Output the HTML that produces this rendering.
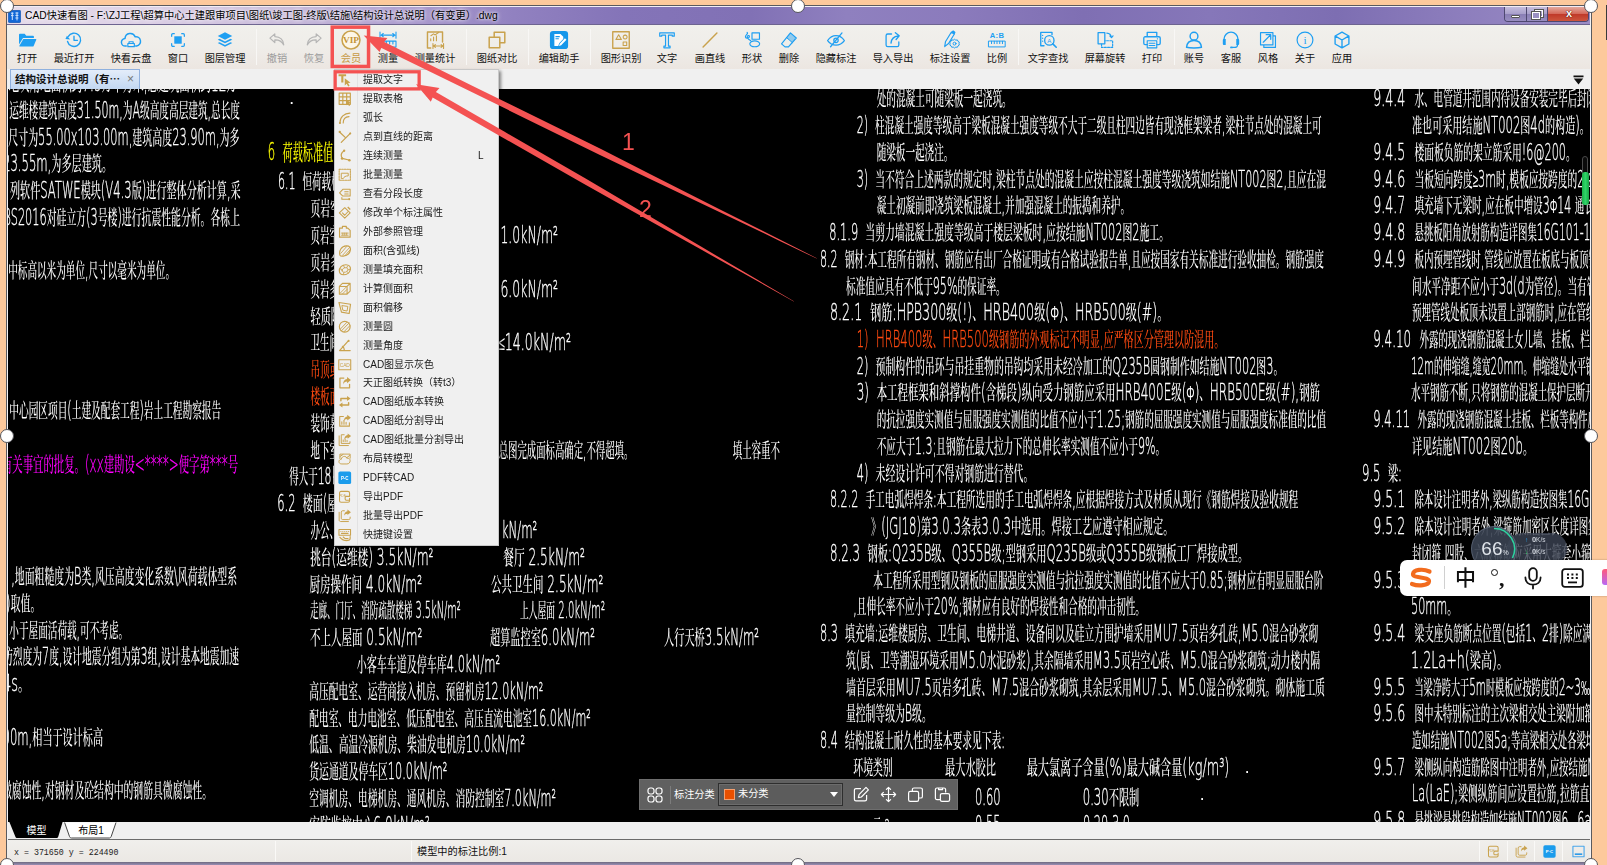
<!DOCTYPE html>
<html lang="zh-CN"><head><meta charset="utf-8"><title>CAD快速看图</title>
<style>
html,body{margin:0;padding:0}
body{width:1607px;height:865px;position:relative;overflow:hidden;background:#fdc99c;font-family:"Liberation Sans","Noto Sans CJK SC","WenQuanYi Zen Hei",sans-serif;font-size:10px;color:#000}
*{box-sizing:border-box}
.abs{position:absolute}
#frame{position:absolute;left:6px;top:5px;width:1586px;height:870px;background:#f4f2f4;border:1px solid #5a5a5e}
#title{position:absolute;left:7px;top:6px;width:1583px;height:19px;background:linear-gradient(90deg,#e6dcea 0,#ddd1e6 8%,#cabcdb 17%,#ad9dcf 25%,#9181c0 32%,#8474b8 39%,#8171b5 47%,#8f80bf 53%,#8b7bbc 60%,#7f6fb3 68%,#8677b9 76%,#7d6eb2 84%,#8d7ebd 92%,#9a8cc5 100%);border-top:1px solid #f3eef6;border-bottom:1px solid #6d6490}
#title .t{position:absolute;left:18px;top:1px;height:16px;line-height:16px;font-size:10.25px;color:#000;white-space:nowrap;text-shadow:0 0 5px rgba(255,255,255,.9),0 0 3px rgba(255,255,255,.8)}
#tb{position:absolute;left:7px;top:25px;width:1583px;height:44px;background:linear-gradient(180deg,#f1f0ec 0,#efede9 50%,#ece6e1 100%)}
.ti{position:absolute;top:0;height:44px;text-align:center;white-space:nowrap}
.ti svg{position:absolute;left:50%;top:4.5px;margin-left:-10px;width:20px;height:20px;overflow:visible}
.ti b{position:absolute;left:-20px;right:-20px;top:27px;height:13px;line-height:13px;font-weight:normal;font-size:10.2px;color:#111}
.ti.dis b{color:#9c9c9c}
.ti.vip b{color:#c79a45}
.sep{position:absolute;top:4px;width:1px;height:36px;background:#d9d5d2;border-right:1px solid #f8f7f5}
#tabs{position:absolute;left:7px;top:69px;width:1583px;height:20px;background:#f0f0f0}
#tab1{position:absolute;left:3px;top:0;width:130px;height:20px;border:1px solid #8fb0de;border-bottom:none;background:linear-gradient(180deg,#e4edfa 0,#cfe0f5 60%,#c3d8f2 100%);font-weight:bold;font-size:10.5px;line-height:19px;padding-left:4px;white-space:nowrap;color:#111}
#tab1 i{position:absolute;right:5px;top:0;font-style:normal;font-weight:normal;color:#777;font-size:12px}
#cv{position:absolute;left:8px;top:89px;width:1582px;height:733px;background:#000;overflow:hidden}
#cad{position:absolute;left:-8px;top:-89px;will-change:transform}
#cad text{font-family:"Liberation Sans","Noto Serif CJK SC",serif;font-size:20px;color:#fff;fill:currentColor;font-weight:500}
#cad .l{font-family:"DejaVu Sans Light","DejaVu Sans","Liberation Sans",sans-serif;font-size:1.15em;font-weight:200;stroke:currentColor;stroke-width:.35px}
#cad .dot{font-family:"Liberation Sans",sans-serif;font-weight:700;font-size:12px}
#mtabs{position:absolute;left:8px;top:822px;width:1582px;height:18px;background:#f0f0f0;border-bottom:1px solid #6b6b6b}
#status{position:absolute;left:7px;top:840px;width:1583px;height:22px;background:linear-gradient(180deg,#f0efec,#ebe8e4)}
#status .m{position:absolute;top:7px;font-family:"Liberation Mono",monospace;font-size:8.3px;line-height:12px;color:#222;white-space:pre}
#status .s{position:absolute;top:6px;font-size:10.2px;line-height:12px;color:#111;white-space:nowrap}
#status .v{position:absolute;top:1px;width:1px;height:20px;background:#dad6d2;border-right:1px solid #faf9f7}
#bot{position:absolute;left:6px;top:862px;width:1586px;height:3px;background:linear-gradient(180deg,#6e6a80,#9a8fb5)}
#menu{position:absolute;left:334px;top:69px;width:165px;height:477px;background:#f0f0f0;border:1px solid #c9c9c9;box-shadow:2px 2px 3px rgba(0,0,0,.45)}
#menu .ic{position:absolute;left:0;top:0;width:23px;height:100%;background:#f0f0f0;border-right:1px solid #e2e2e2}
.mi{position:absolute;left:0;width:163px;height:19px;line-height:19px;font-size:10px;color:#1a1a1a;white-space:nowrap}
.mi svg{position:absolute;left:2.5px;top:3px;width:13.5px;height:13.5px;overflow:visible}
.mi span{position:absolute;left:28px;top:0}
.mi em{position:absolute;left:143px;top:0;font-style:normal}
#ftb{position:absolute;left:631px;top:690px;width:319px;height:31px;background:#606060;border:1px solid #6e6e6e}
#ftb .lab{position:absolute;left:34px;top:8px;line-height:14px;font-size:10.2px;color:#fff;white-space:nowrap}
#ftb .dd{position:absolute;left:78px;top:3px;width:125px;height:23px;background:#5c5c5c;border:1px solid #2e2e2e;box-shadow:inset 0 0 0 1px #6c6c6c}
#ftb .dd i{position:absolute;left:5px;top:5px;width:11px;height:11px;background:#e95000;border:1px solid #f4a070}
#ftb .dd span{position:absolute;left:19px;top:3px;line-height:14px;font-size:10.2px;color:#fff}
#ftb .dd u{position:absolute;right:4px;top:8px;width:0;height:0;border-left:4px solid transparent;border-right:4px solid transparent;border-top:5px solid #fff}
.hd{position:absolute;width:14px;height:14px;border-radius:50%;background:#fff;border:1.8px solid #55555a}
</style></head><body>
<div id="frame"></div>
<div id="title">
<svg class="abs" style="left:1px;top:3px;width:13px;height:13px" viewBox="0 0 13 13"><rect x=".3" y=".3" width="12.400" height="12.400" rx="1.400" fill="#1268d6" stroke="#0d4da6" stroke-width=".6"/><path fill="none" stroke="#cfe4ff" stroke-width="1" d="M3 3.200h2.600M3 5.600h2.600M4.300 2.400v7.600M7.400 3h3M7.400 5.400h3M7.400 8h3M9 2.400v8"/></svg>
<div class="t">CAD快速看图 - F:\ZJ工程\超算中心土建跟审项目\图纸\竣工图-终版\结施\结构设计总说明（有变更）.dwg</div>
<div class="abs" style="left:1497px;top:0;width:85px;height:15px;border:1px solid #4e4870;border-top:none;border-radius:0 0 4px 4px;overflow:hidden;background:linear-gradient(180deg,#b9b0d6,#8b80b6)">
 <div class="abs" style="left:0;top:0;width:22px;height:15px;border-right:1px solid #4e4870;background:linear-gradient(180deg,#c4bcdc 0,#a9a0cb 45%,#8a7fb5 50%,#9a90c2 100%)"><div class="abs" style="left:6px;top:8px;width:9px;height:3px;background:#fff;border:1px solid #555;border-radius:1px"></div></div>
 <div class="abs" style="left:22px;top:0;width:21px;height:15px;border-right:1px solid #4e4870;background:linear-gradient(180deg,#c4bcdc 0,#a9a0cb 45%,#8a7fb5 50%,#9a90c2 100%)"><div class="abs" style="left:8px;top:3px;width:8px;height:7px;border:1.500px solid #fff;outline:1px solid #555"></div><div class="abs" style="left:5px;top:5px;width:8px;height:7px;border:1.500px solid #fff;outline:1px solid #555;background:#9a90c2"></div></div>
 <div class="abs" style="left:43px;top:0;width:42px;height:15px;background:linear-gradient(180deg,#e5a99c 0,#d4695a 45%,#c03a2a 50%,#cf5a40 100%);color:#fff;font-weight:bold;font-size:11px;line-height:13px;text-align:center;text-shadow:0 0 1px #400,0 0 1px #400">x</div>
</div>
</div>
<div id="tb">
<div class="ti " style="left:2px;width:36px"><svg viewBox="0 0 22 22"><path fill="#1f9ff2" d="M2.2 5.2c0-.6.4-1 1-1h5.2l1.8 2h7.4c.6 0 1 .4 1 1v1.6H6.6L2.2 16z"/><path fill="#1f9ff2" d="M7 9.8h13.6c.5 0 .8.4.6.9l-2.9 6.9c-.2.4-.5.6-.9.6H3.2c-.5 0-.8-.4-.6-.9z"/></svg><b>打开</b></div>
<div class="ti " style="left:49px;width:36px"><svg viewBox="0 0 22 22"><path fill="none" stroke="#1f9ff2" stroke-width="1.5" stroke-linecap="round" stroke-linejoin="round" d="M4.6 7.2A7.3 7.3 0 1 1 3.9 12.6"/><path fill="#1f9ff2" d="M1.6 9.9l5.2.6-3.6-4.2z"/><path fill="none" stroke="#1f9ff2" stroke-width="1.5" stroke-linecap="round" stroke-linejoin="round" d="M11 6.8v4.6h3.8"/></svg><b>最近打开</b></div>
<div class="ti " style="left:106px;width:36px"><svg viewBox="0 0 22 22" style="transform:scale(1.08)"><path fill="none" stroke="#1f9ff2" stroke-width="1.5" stroke-linecap="round" stroke-linejoin="round" d="M6.2 17.2H5.4a3.9 3.9 0 0 1-.5-7.8 5.4 5.4 0 0 1 10.4-1.6 4.6 4.6 0 0 1 1.4 9.3h-1"/><path fill="none" stroke="#1f9ff2" stroke-width="1.2" stroke-linecap="round" stroke-linejoin="round" d="M7.8 17.8v-3.2h6.6v3.2zM9 14.4v-1.6h4.2v1.6"/></svg><b>快看云盘</b></div>
<div class="ti " style="left:153px;width:36px"><svg viewBox="0 0 22 22" style="transform:scale(0.85)"><rect x="6.2" y="6.2" width="9.6" height="9.6" fill="#1f9ff2"/><path fill="none" stroke="#1f9ff2" stroke-width="1.6" stroke-linecap="round" stroke-linejoin="round" d="M2.8 6.2V4.3c0-.8.7-1.5 1.5-1.5h1.9M15.8 2.8h1.9c.8 0 1.5.7 1.5 1.5v1.9M19.2 15.8v1.9c0 .8-.7 1.5-1.5 1.5h-1.9M6.2 19.2H4.3c-.8 0-1.5-.7-1.5-1.5v-1.9"/></svg><b>窗口</b></div>
<div class="ti " style="left:200px;width:36px"><svg viewBox="0 0 22 22"><path fill="#1f9ff2" d="M11 2.6l8 4-8 4-8-4z"/><path fill="#1f9ff2" d="M5 9.6l6 3 6-3 2 1-8 4-8-4z"/><path fill="#1f9ff2" d="M5 13.4l6 3 6-3 2 1-8 4-8-4z"/></svg><b>图层管理</b></div>
<div class="sep" style="left:249px"></div>
<div class="ti dis" style="left:252px;width:36px"><svg viewBox="0 0 22 22"><path fill="none" stroke="#b5b5b5" stroke-width="1.3" stroke-linecap="round" stroke-linejoin="round" d="M8.6 4.2L3.2 9l5.4 4.8v-3c4.6-.2 7.6 1.400 9.800 5.600C18 10.600 14.600 7.400 8.600 7.200z"/></svg><b>撤销</b></div>
<div class="ti dis" style="left:289px;width:36px"><svg viewBox="0 0 22 22"><path fill="none" stroke="#b5b5b5" stroke-width="1.3" stroke-linecap="round" stroke-linejoin="round" d="M13.4 4.2L18.8 9l-5.4 4.8v-3c-4.6-.2-7.6 1.400-9.800 5.600C4 10.600 7.400 7.400 13.400 7.200z"/></svg><b>恢复</b></div>
<div class="ti vip" style="left:326px;width:36px"><svg viewBox="0 0 22 22" style="transform:scale(1.06)"><circle cx="11" cy="11" r="9.3" fill="#fdf6e6" stroke="#c9a24d" stroke-width="1.6"/><text x="11" y="14.6" text-anchor="middle" font-family="Liberation Serif,serif" font-weight="bold" font-size="9.6" fill="#c39436">VIP</text></svg><b>会员</b></div>
<div class="ti " style="left:363px;width:36px"><svg viewBox="0 0 22 22"><path fill="none" stroke="#1f9ff2" stroke-width="1.2" stroke-linecap="round" stroke-linejoin="round" d="M2.2 2.200v6.800M19.800 2.200v6.800M3.400 5.600h15.200M5.800 3.800L3.400 5.600l2.400 1.800M16.200 3.800l2.400 1.800-2.400 1.800"/><path fill="none" stroke="#1f9ff2" stroke-width="1.2" stroke-linecap="round" stroke-linejoin="round" d="M2.200 12.200h17.600v6.600H2.200zM5.600 12.400v3M9.200 12.400v3M12.800 12.400v3M16.400 12.400v3"/></svg><b>测量</b></div>
<div class="ti " style="left:410px;width:36px"><svg viewBox="0 0 22 22" style="transform:scale(1.12)"><path fill="none" stroke="#c9a24d" stroke-width="1.4" stroke-linecap="round" stroke-linejoin="round" d="M18.400 13V3.200H3.600v15.600h3.200"/><path fill="none" stroke="#c9a24d" stroke-width="1.1" stroke-linecap="round" stroke-linejoin="round" d="M6.800 11.800v-2M9.600 11.800V8.200M12.400 11.800V6.800M7 6.800l2.600-1.800 1.600 1 3.200-2.400"/><path fill="none" stroke="#c9a24d" stroke-width="1.1" stroke-linecap="round" stroke-linejoin="round" d="M9 14.400v5M19.400 14.400v5M9.600 16.900h9.200M11.400 15.500l-1.800 1.400 1.800 1.400M17 15.500l1.800 1.400-1.800 1.400"/></svg><b>测量统计</b></div>
<div class="sep" style="left:459px"></div>
<div class="ti " style="left:472px;width:36px"><svg viewBox="0 0 22 22" style="transform:scale(1.10)"><path fill="none" stroke="#c9a24d" stroke-width="1.5" stroke-linecap="round" stroke-linejoin="round" d="M8.200 8.200V3.200h10.600v10.600h-5M3.200 8.200h10.600v10.600H3.200z"/></svg><b>图纸对比</b></div>
<div class="sep" style="left:521px"></div>
<div class="ti " style="left:534px;width:36px"><svg viewBox="0 0 22 22" style="transform:scale(1.02)"><rect x="1.200" y="1.200" width="19.600" height="19.600" rx="3.400" fill="#1697ea"/><path fill="#fff" d="M6 4.400h6.600l3 3v2.400l-4.400 4.600-1 3.200H6z"/><path fill="#1697ea" d="M7.200 6.800h4.600v1.100H7.200zM7.200 9h3.600v1.100H7.200z"/><path fill="#fff" d="M17.400 9.200l1.600 1.600-5.600 5.800-2.400.8.800-2.400z"/></svg><b>编辑助手</b></div>
<div class="sep" style="left:583px"></div>
<div class="ti " style="left:596px;width:36px"><svg viewBox="0 0 22 22" style="transform:scale(1.08)"><path fill="none" stroke="#c9a24d" stroke-width="1.4" stroke-linecap="round" stroke-linejoin="round" d="M2.600 2.600h16.800v16.800H2.600z"/><path fill="none" stroke="#c9a24d" stroke-width="1.1" stroke-linecap="round" stroke-linejoin="round" d="M8.600 5.600l2.800 4.800H5.800zM15.200 6a2 2 0 1 0 .01 0M13.200 13h3.600v3.600h-3.600z"/></svg><b>图形识别</b></div>
<div class="ti " style="left:642px;width:36px"><svg viewBox="0 0 22 22"><path fill="none" stroke="#1f9ff2" stroke-width="1.3" stroke-linecap="round" stroke-linejoin="round" d="M3 3.200h16v3.600h-2.200V5.600h-4.200v12.200h1.800v1.800H7.600v-1.800h1.800V5.600H5.200v1.200H3z"/></svg><b>文字</b></div>
<div class="ti " style="left:685px;width:36px"><svg viewBox="0 0 22 22"><path fill="none" stroke="#c9a24d" stroke-width="1.6" stroke-linecap="round" stroke-linejoin="round" d="M3.400 18.600L18.600 3.400"/></svg><b>画直线</b></div>
<div class="ti " style="left:727px;width:36px"><svg viewBox="0 0 22 22"><path fill="none" stroke="#1f9ff2" stroke-width="1.3" stroke-linecap="round" stroke-linejoin="round" d="M11 3.200h8.200v7H11zM8.600 15.200a5.400 3.200 0 1 0 10.800 0a5.400 3.200 0 1 0-10.800 0M5.600 2.600c2 1.600-2.600 3-1.800 5.200.6 1.800 3.400 1.600 4.200-.2.600-1.400-1.200-2-2-1-.8 1.400.6 3.400 3.600 5.200"/></svg><b>形状</b></div>
<div class="ti " style="left:764px;width:36px"><svg viewBox="0 0 22 22"><path fill="none" stroke="#1f9ff2" stroke-width="1.3" stroke-linecap="round" stroke-linejoin="round" d="M12.600 3.200l6.400 5.600-8.600 9.800H6.600l-3.800-3.400z"/><path fill="#1f9ff2" opacity=".45" d="M12.600 3.600l6 5.200-4.200 4.800-6-5.200z"/><path fill="none" stroke="#1f9ff2" stroke-width="1.1" stroke-linecap="round" stroke-linejoin="round" d="M8.200 8.200l6.400 5.600"/></svg><b>删除</b></div>
<div class="ti " style="left:811px;width:36px"><svg viewBox="0 0 22 22"><path fill="none" stroke="#1f9ff2" stroke-width="1.4" stroke-linecap="round" stroke-linejoin="round" d="M1.800 11.600c2.400-3.600 5.600-5.400 9.200-5.400s6.800 1.800 9.200 5.400c-2.400 3.400-5.600 5-9.200 5s-6.800-1.600-9.200-5z"/><circle cx="11" cy="11.400" r="2.400" fill="none" stroke="#1f9ff2" stroke-width="1.4" stroke-linecap="round" stroke-linejoin="round"/><path fill="none" stroke="#1f9ff2" stroke-width="1.4" stroke-linecap="round" stroke-linejoin="round" d="M5 18.400L17.600 3.200"/></svg><b>隐藏标注</b></div>
<div class="ti " style="left:868px;width:36px"><svg viewBox="0 0 22 22"><path fill="none" stroke="#1f9ff2" stroke-width="1.4" stroke-linecap="round" stroke-linejoin="round" d="M9.400 4.400H5.200c-1 0-1.800.8-1.800 1.800v10.400c0 1 .8 1.800 1.800 1.800h10.400c1 0 1.800-.8 1.800-1.800v-3.400"/><path fill="none" stroke="#1f9ff2" stroke-width="1.5" stroke-linecap="round" stroke-linejoin="round" d="M8.800 14.400c.4-4.400 3.200-7.400 8-7.800M13.600 3l4.200 3.400-3.400 4"/></svg><b>导入导出</b></div>
<div class="ti " style="left:925px;width:36px"><svg viewBox="0 0 22 22"><path fill="none" stroke="#1f9ff2" stroke-width="1.3" stroke-linecap="round" stroke-linejoin="round" d="M12.400 2.400l3.400 2-6.400 10.400-4 3.200-.2.200.8-5.200z"/><path fill="#1f9ff2" d="M12.200 2.200l1.600-1.400c.6-.4 1.200-.2 1.800.2l1 .8c.4.400.6 1 .2 1.600l-1 1.600z"/><path fill="none" stroke="#1f9ff2" stroke-width="1.1" stroke-linecap="round" stroke-linejoin="round" d="M14.600 11.200l1.400-1 1.400 1 1.700-.3.700 1.600 1.400.8-.3 1.700.3 1.600-1.400.9-.7 1.500-1.700-.2-1.400 1-1.400-1-1.700.2-.7-1.500-1.400-.9.300-1.600-.3-1.700 1.400-.8.700-1.600z"/><circle cx="16" cy="15" r="1.600" fill="none" stroke="#1f9ff2" stroke-width="1.1" stroke-linecap="round" stroke-linejoin="round"/></svg><b>标注设置</b></div>
<div class="ti " style="left:972px;width:36px"><svg viewBox="0 0 22 22"><text x="11" y="8.600" text-anchor="middle" font-family="Liberation Sans,sans-serif" font-weight="bold" font-size="8.400" fill="#1f9ff2" letter-spacing=".4">A:B</text><path fill="none" stroke="#1f9ff2" stroke-width="1.1" stroke-linecap="round" stroke-linejoin="round" d="M2 12.200h18v6.400H2zM5 12.400v2.600M8 12.400v2.600M11 12.400v2.600M14 12.400v2.600M17 12.400v2.600"/></svg><b>比例</b></div>
<div class="sep" style="left:1011px"></div>
<div class="ti " style="left:1023px;width:36px"><svg viewBox="0 0 22 22" style="transform:scale(1.05)"><path fill="none" stroke="#1f9ff2" stroke-width="1.4" stroke-linecap="round" stroke-linejoin="round" d="M6.800 17H3.400V3h11.800v2.400M5.400 6.200v.01M5.400 9.200v.01M5.400 12.200v.01"/><circle cx="12.400" cy="11.400" r="4.900" fill="none" stroke="#1f9ff2" stroke-width="1.4" stroke-linecap="round" stroke-linejoin="round"/><path fill="none" stroke="#1f9ff2" stroke-width="1.7" stroke-linecap="round" stroke-linejoin="round" d="M16 15l3.600 3.600"/><text x="12.400" y="13.800" text-anchor="middle" font-family="Liberation Sans,sans-serif" font-size="6.400" fill="#1f9ff2">A</text></svg><b>文字查找</b></div>
<div class="ti " style="left:1080px;width:36px"><svg viewBox="0 0 22 22"><path fill="none" stroke="#1f9ff2" stroke-width="1.4" stroke-linecap="round" stroke-linejoin="round" d="M3.400 2.800h7.400v12.400H3.400z"/><path fill="none" stroke="#1f9ff2" stroke-width="1.3" stroke-linecap="round" stroke-linejoin="round" stroke-dasharray="2 1.500" d="M7.200 15.400v3.800h12.200v-7.400h-8.400"/><path fill="none" stroke="#1f9ff2" stroke-width="1.3" stroke-linecap="round" stroke-linejoin="round" d="M13 3.400c2.800.2 4.600 1.800 5 4.600M16.400 6.600l1.800 1.800 1.600-2"/></svg><b>屏幕旋转</b></div>
<div class="ti " style="left:1127px;width:36px"><svg viewBox="0 0 22 22" style="transform:scale(1.05)"><path fill="none" stroke="#1f9ff2" stroke-width="1.4" stroke-linecap="round" stroke-linejoin="round" d="M6 7.600V3h10v4.600M6 15.800H3.800c-.8 0-1.400-.6-1.400-1.400V9c0-.8.600-1.400 1.400-1.400h14.400c.8 0 1.400.6 1.400 1.400v5.400c0 .8-.6 1.400-1.400 1.400H16"/><path fill="none" stroke="#1f9ff2" stroke-width="1.2" stroke-linecap="round" stroke-linejoin="round" d="M6 11.800h10v7.400H6zM8 14.400h6M8 16.800h6M16.600 9.800h.2"/></svg><b>打印</b></div>
<div class="sep" style="left:1167px"></div>
<div class="ti " style="left:1169px;width:36px"><svg viewBox="0 0 22 22"><circle cx="11" cy="6.800" r="4.300" fill="none" stroke="#1f9ff2" stroke-width="1.6" stroke-linecap="round" stroke-linejoin="round"/><path fill="none" stroke="#1f9ff2" stroke-width="1.6" stroke-linecap="round" stroke-linejoin="round" d="M2.800 19c.4-4.600 3.400-7.400 8.200-7.400s7.800 2.800 8.200 7.400c-2 .6-4.800.8-8.200.8s-6.200-.2-8.200-.8z"/></svg><b>账号</b></div>
<div class="ti " style="left:1206px;width:36px"><svg viewBox="0 0 22 22"><path fill="none" stroke="#1f9ff2" stroke-width="1.5" stroke-linecap="round" stroke-linejoin="round" d="M3.400 12.200V10a7.600 7.600 0 0 1 15.200 0v2.200"/><path fill="#1f9ff2" d="M2 11.400c0-.8.600-1.400 1.400-1.400h1.800v6.400H3.400c-.8 0-1.400-.6-1.400-1.400zM20 11.400c0-.8-.6-1.400-1.400-1.400h-1.800v6.400h1.800c.8 0 1.400-.6 1.400-1.400z"/><path fill="none" stroke="#1f9ff2" stroke-width="1.3" stroke-linecap="round" stroke-linejoin="round" d="M18.200 16.400c0 1.600-1.400 2.800-3.400 2.800h-2.200"/><rect x="10" y="18.200" width="3" height="2" rx="1" fill="#1f9ff2"/></svg><b>客服</b></div>
<div class="ti " style="left:1243px;width:36px"><svg viewBox="0 0 22 22"><path fill="none" stroke="#1f9ff2" stroke-width="1.3" stroke-linecap="round" stroke-linejoin="round" d="M2.800 2.800h13.600v13.600H2.800zM16.400 6.400h2.800v12.800H6.400v-2.800"/><path fill="none" stroke="#1f9ff2" stroke-width="1.4" stroke-linecap="round" stroke-linejoin="round" d="M5.800 13.400l8-8M9 5.200h5v5"/></svg><b>风格</b></div>
<div class="ti " style="left:1280px;width:36px"><svg viewBox="0 0 22 22"><circle cx="11" cy="11" r="8.700" fill="none" stroke="#1f9ff2" stroke-width="1.3" stroke-linecap="round" stroke-linejoin="round"/><text x="11" y="15.400" text-anchor="middle" font-family="Liberation Serif,serif" font-size="12.500" fill="#1f9ff2">i</text></svg><b>关于</b></div>
<div class="ti " style="left:1317px;width:36px"><svg viewBox="0 0 22 22"><path fill="none" stroke="#1f9ff2" stroke-width="1.5" stroke-linecap="round" stroke-linejoin="round" d="M11 2.400l7.600 4.200v8.800L11 19.600l-7.600-4.200V6.600zM3.800 6.800L11 11l7.200-4.200M11 11v8.200"/></svg><b>应用</b></div>
</div>
<div id="tabs"><div id="tab1">结构设计总说明（有⋯<i>×</i></div>
<svg class="abs" style="left:1565.5px;top:6px;width:11px;height:10px" viewBox="0 0 11 10"><path fill="#111" d="M.5.500h10v1.800H.5zM.8 3.600h9.400L5.500 9.600z"/></svg>
</div>
<div id="cv">
<svg id="cad" width="1607" height="865" viewBox="0 0 1607 865">
<text x="8.5" y="91.1" textLength="228.5" lengthAdjust="spacingAndGlyphs" xml:space="preserve">地块用地面积约<tspan class="l">7.5</tspan>万平方米<tspan class="l">,</tspan>总建筑面积约<tspan class="l">12</tspan>万</text>
<text x="9.3" y="117.8" textLength="230.7" lengthAdjust="spacingAndGlyphs" xml:space="preserve">运维楼建筑高度<tspan class="l">31.50m,</tspan>为<tspan class="l">A</tspan>级高度高层建筑<tspan class="l">,</tspan>总长度</text>
<text x="8.3" y="144.5" textLength="231.2" lengthAdjust="spacingAndGlyphs" xml:space="preserve">尺寸为<tspan class="l">55.00x103.00m,</tspan>建筑高度<tspan class="l">23.90m,</tspan>为多</text>
<text x="3.0" y="171.3" textLength="109.0" lengthAdjust="spacingAndGlyphs" xml:space="preserve"><tspan class="l">23.55m,</tspan>为多层建筑。</text>
<text x="10.0" y="198.0" textLength="230.7" lengthAdjust="spacingAndGlyphs" xml:space="preserve">列软件<tspan class="l">SATWE</tspan>模块<tspan class="l">(V4.3</tspan>版<tspan class="l">)</tspan>进行整体分析计算<tspan class="l">,</tspan>采</text>
<text x="3.5" y="224.7" textLength="236.5" lengthAdjust="spacingAndGlyphs" xml:space="preserve"><tspan class="l">BS2016</tspan>对硅立方<tspan class="l">(3</tspan>号楼<tspan class="l">)</tspan>进行抗震性能分析。各栋上</text>
<text x="8.2" y="278.2" textLength="166.8" lengthAdjust="spacingAndGlyphs" xml:space="preserve">中标高以米为单位<tspan class="l">,</tspan>尺寸以毫米为单位。</text>
<text x="9.3" y="418.0" textLength="211.9" lengthAdjust="spacingAndGlyphs" xml:space="preserve">中心园区项目<tspan class="l">(</tspan>土建及配套工程<tspan class="l">)</tspan>岩土工程勘察报告</text>
<text x="2.0" y="471.7" textLength="236.0" lengthAdjust="spacingAndGlyphs" style="color:#ff00ff" xml:space="preserve">有关事宜的批复。<tspan class="l">(xx</tspan>建勘设<tspan class="l">&lt;****&gt;</tspan>便字第<tspan class="l">***</tspan>号</text>
<text x="11.2" y="584.2" textLength="225.8" lengthAdjust="spacingAndGlyphs" xml:space="preserve"><tspan class="l">,</tspan>地面粗糙度为<tspan class="l">B</tspan>类<tspan class="l">,</tspan>风压高度变化系数<tspan class="l">\</tspan>风荷载体型系</text>
<text x="6.0" y="610.9" textLength="34.5" lengthAdjust="spacingAndGlyphs" xml:space="preserve"><tspan class="l">)</tspan>取值。</text>
<text x="9.3" y="637.7" textLength="118.9" lengthAdjust="spacingAndGlyphs" xml:space="preserve">小于屋面活荷载<tspan class="l">,</tspan>可不考虑。</text>
<text x="3.0" y="664.4" textLength="236.0" lengthAdjust="spacingAndGlyphs" xml:space="preserve">防烈度为<tspan class="l">7</tspan>度<tspan class="l">,</tspan>设计地震分组为第<tspan class="l">3</tspan>组<tspan class="l">,</tspan>设计基本地震加速</text>
<text x="3.0" y="691.1" textLength="26.3" lengthAdjust="spacingAndGlyphs" xml:space="preserve"><tspan class="l">4s</tspan>。</text>
<text x="2.5" y="744.6" textLength="100.5" lengthAdjust="spacingAndGlyphs" xml:space="preserve"><tspan class="l">00m,</tspan>相当于设计标高</text>
<text x="2.0" y="798.0" textLength="210.0" lengthAdjust="spacingAndGlyphs" xml:space="preserve">微腐蚀性<tspan class="l">,</tspan>对钢材及砼结构中的钢筋具微腐蚀性。</text>
<text x="290.0" y="103.5" class="dot">.</text>
<text x="267.7" y="159.6" textLength="109.9" lengthAdjust="spacingAndGlyphs" style="color:#ffff00;font-size:22px" xml:space="preserve"><tspan class="l">6  </tspan>荷载标准值<tspan class="l">(kN/m²)</tspan></text>
<text x="277.9" y="189.2" textLength="181.2" lengthAdjust="spacingAndGlyphs" xml:space="preserve"><tspan class="l">6.1  </tspan>恒荷载标准值<tspan class="l">:</tspan>混凝土容重<tspan class="l">25kN/m³</tspan></text>
<text x="310.5" y="216.4" textLength="126.8" lengthAdjust="spacingAndGlyphs" xml:space="preserve">页岩空心砖砌体<tspan class="l">(</tspan>含双面抹灰<tspan class="l">)</tspan></text>
<text x="310.5" y="243.2" textLength="109.7" lengthAdjust="spacingAndGlyphs" xml:space="preserve">页岩空心砖砌体墙厚<tspan class="l">200 </tspan></text>
<text x="500.4" y="243.2" textLength="57.6" lengthAdjust="spacingAndGlyphs" xml:space="preserve"><tspan class="l">1.0kN/m²</tspan></text>
<text x="310.5" y="270.0" textLength="126.8" lengthAdjust="spacingAndGlyphs" xml:space="preserve">页岩多孔砖砌体<tspan class="l">(</tspan>含双面抹灰<tspan class="l">)</tspan></text>
<text x="310.5" y="296.8" textLength="109.7" lengthAdjust="spacingAndGlyphs" xml:space="preserve">页岩多孔砖砌体墙厚<tspan class="l">200 </tspan></text>
<text x="500.4" y="296.8" textLength="57.6" lengthAdjust="spacingAndGlyphs" xml:space="preserve"><tspan class="l">6.0kN/m²</tspan></text>
<text x="310.5" y="323.6" textLength="153.9" lengthAdjust="spacingAndGlyphs" xml:space="preserve">轻质隔墙板<tspan class="l">(</tspan>含面层<tspan class="l">) </tspan>≤<tspan class="l">1.0kN/m²</tspan></text>
<text x="310.5" y="350.4" textLength="122.9" lengthAdjust="spacingAndGlyphs" xml:space="preserve">卫生间回填材料采用轻质陶粒</text>
<text x="498.7" y="350.4" textLength="72.3" lengthAdjust="spacingAndGlyphs" xml:space="preserve">≤<tspan class="l">14.0kN/m²</tspan></text>
<text x="310.5" y="377.2" textLength="121.6" lengthAdjust="spacingAndGlyphs" style="color:#ff4a10" xml:space="preserve">吊顶或吊挂荷载<tspan class="l"> 0.5kN/m²</tspan></text>
<text x="310.5" y="404.0" textLength="112.1" lengthAdjust="spacingAndGlyphs" style="color:#ff4a10" xml:space="preserve">楼板面层荷载<tspan class="l"> 1.5kN/m²</tspan></text>
<text x="310.5" y="430.8" textLength="112.1" lengthAdjust="spacingAndGlyphs" xml:space="preserve">装饰幕墙自重<tspan class="l"> 1.0kN/m²</tspan></text>
<text x="310.5" y="457.6" textLength="122.9" lengthAdjust="spacingAndGlyphs" xml:space="preserve">地下室顶板覆土荷载根据建筑</text>
<text x="498.7" y="457.6" textLength="134.6" lengthAdjust="spacingAndGlyphs" xml:space="preserve">总图完成面标高确定<tspan class="l">,</tspan>不得超填。</text>
<text x="732.7" y="457.6" textLength="47.3" lengthAdjust="spacingAndGlyphs" xml:space="preserve">填土容重不</text>
<text x="289.3" y="484.4" textLength="75.2" lengthAdjust="spacingAndGlyphs" xml:space="preserve">得大于<tspan class="l">18kN/m³</tspan></text>
<text x="277.3" y="511.2" textLength="138.3" lengthAdjust="spacingAndGlyphs" xml:space="preserve"><tspan class="l">6.2  </tspan>楼面<tspan class="l">(</tspan>屋面<tspan class="l">)</tspan>活荷载标准值<tspan class="l">:</tspan></text>
<text x="310.5" y="538.0" textLength="113.4" lengthAdjust="spacingAndGlyphs" xml:space="preserve">办公、会议室、运维值班室</text>
<text x="501.7" y="538.0" textLength="35.6" lengthAdjust="spacingAndGlyphs" xml:space="preserve"><tspan class="l">kN/m²</tspan></text>
<text x="310.2" y="564.8" textLength="123.3" lengthAdjust="spacingAndGlyphs" xml:space="preserve">挑台<tspan class="l">(</tspan>运维楼<tspan class="l">) 3.5kN/m²</tspan></text>
<text x="503.3" y="564.8" textLength="81.7" lengthAdjust="spacingAndGlyphs" xml:space="preserve">餐厅<tspan class="l"> 2.5kN/m²</tspan></text>
<text x="309.5" y="591.6" textLength="112.5" lengthAdjust="spacingAndGlyphs" xml:space="preserve">厨房操作间<tspan class="l"> 4.0kN/m²</tspan></text>
<text x="491.0" y="591.6" textLength="112.3" lengthAdjust="spacingAndGlyphs" xml:space="preserve">公共卫生间<tspan class="l"> 2.5kN/m²</tspan></text>
<text x="310.0" y="618.4" textLength="150.8" lengthAdjust="spacingAndGlyphs" xml:space="preserve">走廊、门厅、消防疏散楼梯<tspan class="l"> 3.5kN/m²</tspan></text>
<text x="520.0" y="618.4" textLength="85.0" lengthAdjust="spacingAndGlyphs" xml:space="preserve">上人屋面<tspan class="l"> 2.0kN/m²</tspan></text>
<text x="310.0" y="645.2" textLength="112.3" lengthAdjust="spacingAndGlyphs" xml:space="preserve">不上人屋面<tspan class="l"> 0.5kN/m²</tspan></text>
<text x="490.0" y="645.2" textLength="105.0" lengthAdjust="spacingAndGlyphs" xml:space="preserve">超算监控室<tspan class="l">6.0kN/m²</tspan></text>
<text x="664.0" y="645.2" textLength="95.0" lengthAdjust="spacingAndGlyphs" xml:space="preserve">人行天桥<tspan class="l">3.5kN/m²</tspan></text>
<text x="356.7" y="672.0" textLength="143.3" lengthAdjust="spacingAndGlyphs" xml:space="preserve">小客车车道及停车库<tspan class="l">4.0kN/m²</tspan></text>
<text x="309.3" y="698.8" textLength="234.0" lengthAdjust="spacingAndGlyphs" xml:space="preserve">高压配电室、运营商接入机房、预留机房<tspan class="l">12.0kN/m²</tspan></text>
<text x="309.3" y="725.6" textLength="281.4" lengthAdjust="spacingAndGlyphs" xml:space="preserve">配电室、电力电池室、低压配电室、高压直流电池室<tspan class="l">16.0kN/m²</tspan></text>
<text x="309.3" y="752.4" textLength="215.7" lengthAdjust="spacingAndGlyphs" xml:space="preserve">低温、高温冷源机房、柴油发电机房<tspan class="l">10.0kN/m²</tspan></text>
<text x="309.3" y="779.2" textLength="138.0" lengthAdjust="spacingAndGlyphs" xml:space="preserve">货运通道及停车区<tspan class="l">10.0kN/m²</tspan></text>
<text x="309.3" y="806.0" textLength="246.7" lengthAdjust="spacingAndGlyphs" xml:space="preserve">空调机房、电梯机房、通风机房、消防控制室<tspan class="l">7.0kN/m²</tspan></text>
<text x="309.3" y="832.8" textLength="120.7" lengthAdjust="spacingAndGlyphs" xml:space="preserve">安防监控中心<tspan class="l">6.0kN/m²</tspan></text>
<text x="876.7" y="106.4" textLength="135.0" lengthAdjust="spacingAndGlyphs" xml:space="preserve">处的混凝土可随梁板一起浇筑。</text>
<text x="856.7" y="133.1" textLength="465.0" lengthAdjust="spacingAndGlyphs" xml:space="preserve"><tspan class="l">2)  </tspan>柱混凝土强度等级高于梁板混凝土强度等级不大于二级且柱四边皆有现浇框架梁者<tspan class="l">,</tspan>梁柱节点处的混凝土可</text>
<text x="876.7" y="159.9" textLength="76.6" lengthAdjust="spacingAndGlyphs" xml:space="preserve">随梁板一起浇注。</text>
<text x="856.7" y="186.6" textLength="469.3" lengthAdjust="spacingAndGlyphs" xml:space="preserve"><tspan class="l">3)  </tspan>当不符合上述两款的规定时<tspan class="l">,</tspan>梁柱节点处的混凝土应按柱混凝土强度等级浇筑如结施<tspan class="l">NT002</tspan>图<tspan class="l">2,</tspan>且应在混</text>
<text x="876.7" y="213.3" textLength="253.3" lengthAdjust="spacingAndGlyphs" xml:space="preserve">凝土初凝前即浇筑梁板混凝土<tspan class="l">,</tspan>并加强混凝土的振捣和养护。</text>
<text x="829.3" y="240.1" textLength="339.7" lengthAdjust="spacingAndGlyphs" xml:space="preserve"><tspan class="l">8.1.9  </tspan>当剪力墙混凝土强度等级高于楼层梁板时<tspan class="l">,</tspan>应按结施<tspan class="l">NT002</tspan>图<tspan class="l">2</tspan>施工。</text>
<text x="820.0" y="266.8" textLength="504.0" lengthAdjust="spacingAndGlyphs" xml:space="preserve"><tspan class="l">8.2  </tspan>钢材<tspan class="l">:</tspan>本工程所有钢材、钢筋应有出厂合格证明或有合格试验报告单<tspan class="l">,</tspan>且应按国家有关标准进行验收抽检。钢筋强度</text>
<text x="846.0" y="293.5" textLength="159.7" lengthAdjust="spacingAndGlyphs" xml:space="preserve">标准值应具有不低于<tspan class="l">95%</tspan>的保证率。</text>
<text x="830.0" y="320.2" textLength="338.3" lengthAdjust="spacingAndGlyphs" xml:space="preserve"><tspan class="l">8.2.1  </tspan>钢筋<tspan class="l">:HPB300</tspan>级<tspan class="l">(!)</tspan>、<tspan class="l">HRB400</tspan>级<tspan class="l">(</tspan>Φ<tspan class="l">)</tspan>、<tspan class="l">HRB500</tspan>级<tspan class="l">(#)</tspan>。</text>
<text x="856.7" y="347.0" textLength="367.6" lengthAdjust="spacingAndGlyphs" style="color:#ff4a10" xml:space="preserve"><tspan class="l">1)  HRB400</tspan>级、<tspan class="l">HRB500</tspan>级钢筋的外观标记不明显<tspan class="l">,</tspan>应严格区分管理以防混用。</text>
<text x="856.7" y="373.7" textLength="426.6" lengthAdjust="spacingAndGlyphs" xml:space="preserve"><tspan class="l">2)  </tspan>预制构件的吊环与吊挂重物的吊钩均采用未经冷加工的<tspan class="l">Q235B</tspan>圆钢制作如结施<tspan class="l">NT002</tspan>图<tspan class="l">3</tspan>。</text>
<text x="856.7" y="400.4" textLength="463.3" lengthAdjust="spacingAndGlyphs" xml:space="preserve"><tspan class="l">3)  </tspan>本工程框架和斜撑构件<tspan class="l">(</tspan>含梯段<tspan class="l">)</tspan>纵向受力钢筋应采用<tspan class="l">HRB400E</tspan>级<tspan class="l">(</tspan>Φ<tspan class="l">)</tspan>、<tspan class="l">HRB500E</tspan>级<tspan class="l">(#),</tspan>钢筋</text>
<text x="876.7" y="427.2" textLength="449.3" lengthAdjust="spacingAndGlyphs" xml:space="preserve">的抗拉强度实测值与屈服强度实测值的比值不应小于<tspan class="l">1.25;</tspan>钢筋的屈服强度实测值与屈服强度标准值的比值</text>
<text x="876.7" y="453.9" textLength="288.3" lengthAdjust="spacingAndGlyphs" xml:space="preserve">不应大于<tspan class="l">1.3;</tspan>且钢筋在最大拉力下的总伸长率实测值不应小于<tspan class="l">9%</tspan>。</text>
<text x="856.7" y="480.6" textLength="176.6" lengthAdjust="spacingAndGlyphs" xml:space="preserve"><tspan class="l">4)  </tspan>未经设计许可不得对钢筋进行替代。</text>
<text x="830.0" y="507.3" textLength="468.3" lengthAdjust="spacingAndGlyphs" xml:space="preserve"><tspan class="l">8.2.2  </tspan>手工电弧焊焊条<tspan class="l">:</tspan>本工程所选用的手工电弧焊焊条<tspan class="l">,</tspan>应根据焊接方式及材质从现行《钢筋焊接及验收规程</text>
<text x="871.0" y="534.1" textLength="302.3" lengthAdjust="spacingAndGlyphs" xml:space="preserve">》<tspan class="l">(JGJ18)</tspan>第<tspan class="l">3.0.3</tspan>条表<tspan class="l">3.0.3</tspan>中选用。焊接工艺应遵守相应规定。</text>
<text x="830.0" y="560.8" textLength="418.3" lengthAdjust="spacingAndGlyphs" xml:space="preserve"><tspan class="l">8.2.3  </tspan>钢板<tspan class="l">:Q235B</tspan>级、<tspan class="l">Q355B</tspan>级<tspan class="l">;</tspan>型钢采用<tspan class="l">Q235B</tspan>级或<tspan class="l">Q355B</tspan>级钢板工厂焊接成型。</text>
<text x="873.3" y="587.5" textLength="450.0" lengthAdjust="spacingAndGlyphs" xml:space="preserve">本工程所采用型钢及钢板的屈服强度实测值与抗拉强度实测值的比值不应大于<tspan class="l">0.85;</tspan>钢材应有明显屈服台阶</text>
<text x="853.3" y="614.3" textLength="291.7" lengthAdjust="spacingAndGlyphs" xml:space="preserve"><tspan class="l">,</tspan>且伸长率不应小于<tspan class="l">20%;</tspan>钢材应有良好的焊接性和合格的冲击韧性。</text>
<text x="820.0" y="641.0" textLength="498.3" lengthAdjust="spacingAndGlyphs" xml:space="preserve"><tspan class="l">8.3  </tspan>填充墙<tspan class="l">:</tspan>运维楼厨房、卫生间、电梯井道、设备间以及硅立方围护墙采用<tspan class="l">MU7.5</tspan>页岩多孔砖<tspan class="l">,M5.0</tspan>混合砂浆砌</text>
<text x="846.0" y="667.7" textLength="474.0" lengthAdjust="spacingAndGlyphs" xml:space="preserve">筑<tspan class="l">(</tspan>厨、卫等潮湿环境采用<tspan class="l">M5.0</tspan>水泥砂浆<tspan class="l">),</tspan>其余隔墙采用<tspan class="l">M3.5</tspan>页岩空心砖、<tspan class="l">M5.0</tspan>混合砂浆砌筑<tspan class="l">;</tspan>动力楼内隔</text>
<text x="846.0" y="694.5" textLength="479.0" lengthAdjust="spacingAndGlyphs" xml:space="preserve">墙首层采用<tspan class="l">MU7.5</tspan>页岩多孔砖、<tspan class="l">M7.5</tspan>混合砂浆砌筑<tspan class="l">,</tspan>其余层采用<tspan class="l">MU7.5</tspan>、<tspan class="l">M5.0</tspan>混合砂浆砌筑。砌体施工质</text>
<text x="846.0" y="721.2" textLength="85.7" lengthAdjust="spacingAndGlyphs" xml:space="preserve">量控制等级为<tspan class="l">B</tspan>级。</text>
<text x="820.0" y="747.9" textLength="185.0" lengthAdjust="spacingAndGlyphs" xml:space="preserve"><tspan class="l">8.4  </tspan>结构混凝土耐久性的基本要求见下表<tspan class="l">:</tspan></text>
<text x="853.3" y="774.6" textLength="39.4" lengthAdjust="spacingAndGlyphs" xml:space="preserve">环境类别</text>
<text x="945.0" y="774.6" textLength="51.0" lengthAdjust="spacingAndGlyphs" xml:space="preserve">最大水胶比</text>
<text x="1026.7" y="774.6" textLength="202.6" lengthAdjust="spacingAndGlyphs" xml:space="preserve">最大氯离子含量<tspan class="l">(%)</tspan>最大碱含量<tspan class="l">(kg/m³)</tspan></text>
<text x="1245.5" y="772.5" class="dot">.</text>
<text x="975.0" y="805.0" textLength="25.7" lengthAdjust="spacingAndGlyphs" xml:space="preserve"><tspan class="l">0.60</tspan></text>
<text x="1082.7" y="805.0" textLength="56.6" lengthAdjust="spacingAndGlyphs" xml:space="preserve"><tspan class="l">0.30</tspan>不限制</text>
<text x="1200.5" y="800.1" class="dot">.</text>
<text x="873.0" y="832.4" textLength="17.0" lengthAdjust="spacingAndGlyphs" xml:space="preserve">二<tspan class="l"> a</tspan></text>
<text x="975.0" y="832.4" textLength="25.7" lengthAdjust="spacingAndGlyphs" xml:space="preserve"><tspan class="l">0.55</tspan></text>
<text x="1083.0" y="832.4" textLength="47.0" lengthAdjust="spacingAndGlyphs" xml:space="preserve"><tspan class="l">0.20 3.0</tspan></text>
<text x="1373.2" y="106.4" textLength="32.0" lengthAdjust="spacingAndGlyphs" xml:space="preserve"><tspan class="l">9.4.4</tspan></text>
<text x="1414.5" y="106.4" textLength="205.1" lengthAdjust="spacingAndGlyphs" xml:space="preserve">水、电管道井范围内待设备安装完毕后封闭<tspan class="l">(</tspan>楼板</text>
<text x="1412.0" y="133.1" textLength="177.8" lengthAdjust="spacingAndGlyphs" xml:space="preserve">准也可采用结施<tspan class="l">NT002</tspan>图<tspan class="l">4d</tspan>的构造<tspan class="l">)</tspan>。</text>
<text x="1373.2" y="159.9" textLength="32.0" lengthAdjust="spacingAndGlyphs" xml:space="preserve"><tspan class="l">9.4.5</tspan></text>
<text x="1414.5" y="159.9" textLength="161.2" lengthAdjust="spacingAndGlyphs" xml:space="preserve">楼面板负筋的架立筋采用<tspan class="l">!6@200</tspan>。</text>
<text x="1373.2" y="186.6" textLength="32.0" lengthAdjust="spacingAndGlyphs" xml:space="preserve"><tspan class="l">9.4.6</tspan></text>
<text x="1414.5" y="186.6" textLength="208.6" lengthAdjust="spacingAndGlyphs" xml:space="preserve">当板短向跨度≥<tspan class="l">3m</tspan>时<tspan class="l">,</tspan>模板应按跨度的<tspan class="l">2</tspan>‰起拱。</text>
<text x="1373.2" y="213.3" textLength="32.0" lengthAdjust="spacingAndGlyphs" xml:space="preserve"><tspan class="l">9.4.7</tspan></text>
<text x="1414.5" y="213.3" textLength="198.7" lengthAdjust="spacingAndGlyphs" xml:space="preserve">填充墙下无梁时<tspan class="l">,</tspan>应在板中增设<tspan class="l">3</tspan>Φ<tspan class="l">14 </tspan>通长钢筋</text>
<text x="1373.2" y="240.1" textLength="32.0" lengthAdjust="spacingAndGlyphs" xml:space="preserve"><tspan class="l">9.4.8</tspan></text>
<text x="1414.5" y="240.1" textLength="215.4" lengthAdjust="spacingAndGlyphs" xml:space="preserve">悬挑板阳角放射筋构造详图集<tspan class="l">16G101-1</tspan>第<tspan class="l">112</tspan>页</text>
<text x="1373.2" y="266.8" textLength="32.0" lengthAdjust="spacingAndGlyphs" xml:space="preserve"><tspan class="l">9.4.9</tspan></text>
<text x="1414.5" y="266.8" textLength="202.4" lengthAdjust="spacingAndGlyphs" xml:space="preserve">板内预埋管线时<tspan class="l">,</tspan>管线应放置在板底与板顶钢筋之</text>
<text x="1412.0" y="293.5" textLength="194.1" lengthAdjust="spacingAndGlyphs" xml:space="preserve">间水平净距不应小于<tspan class="l">3d(d</tspan>为管径<tspan class="l">)</tspan>。当有管线</text>
<text x="1412.0" y="320.2" textLength="193.0" lengthAdjust="spacingAndGlyphs" xml:space="preserve">预埋管线处板顶未设置上部钢筋时<tspan class="l">,</tspan>应在管线顶</text>
<text x="1373.2" y="347.0" textLength="38.0" lengthAdjust="spacingAndGlyphs" xml:space="preserve"><tspan class="l">9.4.10</tspan></text>
<text x="1419.5" y="347.0" textLength="189.0" lengthAdjust="spacingAndGlyphs" xml:space="preserve">外露的现浇钢筋混凝土女儿墙、挂板、栏板等</text>
<text x="1411.0" y="373.7" textLength="192.6" lengthAdjust="spacingAndGlyphs" xml:space="preserve"><tspan class="l">12m</tspan>的伸缩缝<tspan class="l">,</tspan>缝宽<tspan class="l">20mm</tspan>。伸缩缝处水平钢筋</text>
<text x="1411.0" y="400.4" textLength="183.5" lengthAdjust="spacingAndGlyphs" xml:space="preserve">水平钢筋不断<tspan class="l">,</tspan>只将钢筋的混凝土保护层断开</text>
<text x="1373.2" y="427.2" textLength="37.0" lengthAdjust="spacingAndGlyphs" xml:space="preserve"><tspan class="l">9.4.11</tspan></text>
<text x="1417.5" y="427.2" textLength="179.5" lengthAdjust="spacingAndGlyphs" xml:space="preserve">外露的现浇钢筋混凝土挂板、栏板等构件应</text>
<text x="1412.0" y="453.9" textLength="121.0" lengthAdjust="spacingAndGlyphs" xml:space="preserve">详见结施<tspan class="l">NT002</tspan>图<tspan class="l">20b</tspan>。</text>
<text x="1362.0" y="480.6" textLength="40.0" lengthAdjust="spacingAndGlyphs" xml:space="preserve"><tspan class="l">9.5  </tspan>梁<tspan class="l">:</tspan></text>
<text x="1373.2" y="507.3" textLength="32.0" lengthAdjust="spacingAndGlyphs" xml:space="preserve"><tspan class="l">9.5.1</tspan></text>
<text x="1414.5" y="507.3" textLength="195.4" lengthAdjust="spacingAndGlyphs" xml:space="preserve">除本设计注明者外<tspan class="l">,</tspan>梁纵筋构造按图集<tspan class="l">16G101</tspan></text>
<text x="1373.2" y="534.1" textLength="32.0" lengthAdjust="spacingAndGlyphs" xml:space="preserve"><tspan class="l">9.5.2</tspan></text>
<text x="1414.5" y="534.1" textLength="196.9" lengthAdjust="spacingAndGlyphs" xml:space="preserve">除本设计注明者外<tspan class="l">,</tspan>梁箍筋加密区长度详图集<tspan class="l">16</tspan></text>
<text x="1412.0" y="560.8" textLength="188.5" lengthAdjust="spacingAndGlyphs" xml:space="preserve">封闭箍<tspan class="l">,</tspan>四肢、六肢箍筋应采用大箍套小箍。</text>
<text x="1373.2" y="587.5" textLength="32.0" lengthAdjust="spacingAndGlyphs" xml:space="preserve"><tspan class="l">9.5.3</tspan></text>
<text x="1414.5" y="587.5" textLength="183.5" lengthAdjust="spacingAndGlyphs" xml:space="preserve">主次梁相交处<tspan class="l">,</tspan>次梁上下纵筋应置于主梁上下</text>
<text x="1411.0" y="614.3" textLength="46.0" lengthAdjust="spacingAndGlyphs" xml:space="preserve"><tspan class="l">50mm</tspan>。</text>
<text x="1373.2" y="641.0" textLength="32.0" lengthAdjust="spacingAndGlyphs" xml:space="preserve"><tspan class="l">9.5.4</tspan></text>
<text x="1414.5" y="641.0" textLength="196.9" lengthAdjust="spacingAndGlyphs" xml:space="preserve">梁支座负筋断点位置<tspan class="l">(</tspan>包括<tspan class="l">1</tspan>、<tspan class="l">2</tspan>排<tspan class="l">)</tspan>除应满足图</text>
<text x="1411.0" y="667.7" textLength="97.0" lengthAdjust="spacingAndGlyphs" xml:space="preserve"><tspan class="l">1.2La+h(</tspan>梁高<tspan class="l">)</tspan>。</text>
<text x="1373.2" y="694.5" textLength="32.0" lengthAdjust="spacingAndGlyphs" xml:space="preserve"><tspan class="l">9.5.5</tspan></text>
<text x="1414.5" y="694.5" textLength="184.7" lengthAdjust="spacingAndGlyphs" xml:space="preserve">当梁净跨大于<tspan class="l">5m</tspan>时模板应按跨度的<tspan class="l">2~3</tspan>‰起</text>
<text x="1373.2" y="721.2" textLength="32.0" lengthAdjust="spacingAndGlyphs" xml:space="preserve"><tspan class="l">9.5.6</tspan></text>
<text x="1414.5" y="721.2" textLength="189.0" lengthAdjust="spacingAndGlyphs" xml:space="preserve">图中未特别标注的主次梁相交处主梁附加箍筋</text>
<text x="1412.0" y="747.9" textLength="183.2" lengthAdjust="spacingAndGlyphs" xml:space="preserve">造如结施<tspan class="l">NT002</tspan>图<tspan class="l">5a;</tspan>等高梁相交处各梁均</text>
<text x="1373.2" y="774.6" textLength="32.0" lengthAdjust="spacingAndGlyphs" xml:space="preserve"><tspan class="l">9.5.7</tspan></text>
<text x="1414.5" y="774.6" textLength="187.5" lengthAdjust="spacingAndGlyphs" xml:space="preserve">梁侧纵向构造筋除图中注明者外<tspan class="l">,</tspan>应按结施<tspan class="l">NT</tspan></text>
<text x="1412.0" y="801.4" textLength="187.2" lengthAdjust="spacingAndGlyphs" xml:space="preserve"><tspan class="l">La(LaE);</tspan>梁侧纵筋间应设置拉筋<tspan class="l">,</tspan>拉筋直径</text>
<text x="1373.2" y="828.1" textLength="32.0" lengthAdjust="spacingAndGlyphs" xml:space="preserve"><tspan class="l">9.5.8</tspan></text>
<text x="1414.5" y="828.1" textLength="176.5" lengthAdjust="spacingAndGlyphs" xml:space="preserve">悬挑梁悬挑段构造如结施<tspan class="l">NT002</tspan>图<tspan class="l">6</tspan>、<tspan class="l">6a</tspan></text>
</svg>
<div class="abs" style="left:1573.500px;top:67px;width:6.500px;height:49px;border:1px solid #4a4a4a;border-radius:3.500px;background:#0a0a0a"><div class="abs" style="left:-.5px;bottom:-1px;width:6.500px;height:33px;border-radius:3px;background:linear-gradient(90deg,#19b04a,#2fd468,#16a444)"></div></div>
<div id="w66" class="abs" style="left:1463px;top:437px;width:104px;height:40px">
 <div class="abs" style="left:36px;top:7px;width:60px;height:31px;border-radius:15px;background:rgba(58,66,82,.82)"></div>
 <div class="abs" style="left:0;top:0;width:46px;height:46px;border-radius:50%;background:rgba(58,66,82,.9);border:1.500px solid rgba(110,120,140,.6)"></div>
 <svg class="abs" style="left:0;top:0;width:46px;height:46px" viewBox="0 0 46 46"><path d="M23 2.500A20.500 20.500 0 0 1 41.500 32" fill="none" stroke="#2fd3a0" stroke-width="1.600"/></svg>
 <div class="abs" style="left:3px;top:13px;width:42px;font-size:19px;line-height:20px;color:#dfe4ea;text-align:center;font-family:'Liberation Sans',sans-serif">66<span style="font-size:7px">%</span></div>
 <div class="abs" style="left:54px;top:10px;font-size:6.500px;line-height:8px;color:#cfd4dc;white-space:nowrap"><span style="color:#2aa0e8">↑</span> &nbsp;<b style="font-size:7.500px">0</b>K/s</div>
 <div class="abs" style="left:54px;top:22px;font-size:6.500px;line-height:8px;color:#cfd4dc;white-space:nowrap"><span style="color:#2fd468">↓</span> &nbsp;<b style="font-size:7.500px">0</b>K/s</div>
</div>
<div id="ftb">
 <svg class="abs" style="left:7px;top:7px;width:16px;height:16px" viewBox="0 0 16 16"><g fill="none" stroke="#fff" stroke-width="1.200"><rect x="1" y="1" width="6" height="6" rx="2.200"/><rect x="9" y="1" width="6" height="6" rx="2.200"/><rect x="1" y="9" width="6" height="6" rx="2.200"/><rect x="9" y="9" width="6" height="6" rx="2.200"/></g></svg>
 <div class="abs" style="left:30px;top:6px;width:1px;height:18px;background:#7c7c7c"></div>
 <div class="lab">标注分类</div>
 <div class="dd"><i></i><span>未分类</span><u></u></div>
 <svg class="abs" style="left:213px;top:6px;width:17px;height:17px" viewBox="0 0 17 17"><path fill="none" stroke="#fff" stroke-width="1.200" stroke-linejoin="round" d="M8 2.600H3c-1 0-1.600.6-1.600 1.600v9c0 1 .6 1.600 1.600 1.600h9c1 0 1.600-.6 1.600-1.600V9M6 8.600L13 1.400l2.400 2.400-7 7.200-3 .6z"/></svg>
 <svg class="abs" style="left:240px;top:6px;width:17px;height:17px" viewBox="0 0 17 17"><path fill="none" stroke="#fff" stroke-width="1.200" stroke-linecap="round" stroke-linejoin="round" d="M8.500 1.400v14.200M1.400 8.500h14.200M6.400 3.400l2.100-2 2.100 2M6.400 13.600l2.100 2 2.100-2M3.400 6.400l-2 2.100 2 2.100M13.600 6.400l2 2.100-2 2.100"/></svg>
 <svg class="abs" style="left:267px;top:6px;width:17px;height:17px" viewBox="0 0 17 17"><path fill="none" stroke="#fff" stroke-width="1.200" stroke-linejoin="round" d="M5.400 5.400V3.600c0-1 .6-1.600 1.600-1.600h6.800c1 0 1.600.6 1.600 1.600v6.800c0 1-.6 1.600-1.600 1.600H12M3.200 5.400H10c1 0 1.600.6 1.600 1.600v6.800c0 1-.6 1.600-1.600 1.600H3.200c-1 0-1.600-.6-1.600-1.600V7c0-1 .6-1.600 1.600-1.600z"/></svg>
 <svg class="abs" style="left:294px;top:6px;width:17px;height:17px" viewBox="0 0 17 17"><path fill="none" stroke="#fff" stroke-width="1.200" stroke-linejoin="round" d="M6 13.600H3c-1 0-1.600-.6-1.600-1.600V3.600C1.400 2.600 2 2 3 2h7c1 0 1.600.6 1.600 1.600v3M4.600 2v1.600h4V2M8 7.600h6c1 0 1.600.6 1.600 1.600v4.600c0 1-.6 1.600-1.600 1.600H8c-1 0-1.600-.6-1.600-1.600V9.200c0-1 .6-1.600 1.600-1.600z"/></svg>
</div>
</div><!-- /cv -->
<div id="mtabs">
<svg class="abs" style="left:0;top:0;width:140px;height:18px" viewBox="0 0 140 18"><path d="M1.400 0h53.200l-4.300 14.500c-.4 1-1 1.500-2 1.500H9.300c-1 0-1.600-.5-2-1.500z" fill="#000"/><path d="M108 .5l-4.800 14c-.4 1-1 1.500-2 1.500H63.500c-1 0-1.600-.5-2-1.500L56.600 .5" fill="#fff" stroke="#444" stroke-width="1"/><text x="28.500" y="12" text-anchor="middle" font-size="10" fill="#fff" font-family="Liberation Sans,Noto Sans CJK SC,sans-serif">模型</text><text x="83" y="12" text-anchor="middle" font-size="10" fill="#000" font-family="Liberation Sans,Noto Sans CJK SC,sans-serif">布局1</text></svg>
</div>
<div id="status">
<div class="m" style="left:7px">x = 371650 y = 224490</div>
<div class="v" style="left:268px"></div><div class="v" style="left:404px"></div>
<div class="s" style="left:410px">模型中的标注比例:1</div>
<div class="v" style="left:1471.8px"></div>
<div class="v" style="left:1499.5px"></div>
<div class="v" style="left:1527.4px"></div>
<div class="v" style="left:1555.2px"></div>
<svg class="abs" style="left:1480.0px;top:5px;width:13px;height:13px;overflow:visible" viewBox="0 0 14 14"><path fill="none" stroke="#c9a24d" stroke-width="1.1" stroke-linecap="round" stroke-linejoin="round" d="M12 8.600v2.600c0 1-.6 1.600-1.600 1.600H3.200c-1 0-1.600-.6-1.600-1.600V3c0-1 .6-1.600 1.600-1.600h7c1 0 1.800.6 1.800 1.600v3.600M12 6.600H8.600c-.8 0-1.200.4-1.200 1.200v1.600c0 .8.400 1.200 1.200 1.200H12"/><text x="4.600" y="7" text-anchor="middle" font-family="Liberation Sans,sans-serif" font-size="3.600" fill="#c9a24d">PDF</text></svg>
<svg class="abs" style="left:1508.2px;top:5px;width:13px;height:13px;overflow:visible" viewBox="0 0 14 14"><path fill="none" stroke="#c9a24d" stroke-width="1" stroke-linecap="round" stroke-linejoin="round" d="M1.200 3.400v8c0 1 .6 1.600 1.600 1.600h8M6.600 1.800H4.800c-.8 0-1.400.6-1.400 1.400v6.400c0 .8.600 1.400 1.400 1.400h6.400c.8 0 1.400-.6 1.400-1.400V8.400"/><path fill="#c9a24d" d="M9.800.6l3.600 2.800-3.600 2.800V4.800c-1.800 0-2.800.8-3.400 2.200 0-2.600 1.200-4.200 3.400-4.600z"/></svg>
<svg class="abs" style="left:1536.3px;top:5px;width:13px;height:13px;overflow:visible" viewBox="0 0 14 14"><rect x=".4" y=".4" width="13.200" height="13.200" rx="1.800" fill="#1b9cec"/><text x="7" y="9" text-anchor="middle" font-family="Liberation Sans,sans-serif" font-size="4.600" font-weight="bold" fill="#fff">P·C</text></svg>
<svg class="abs" style="left:1564.5px;top:5px;width:13px;height:13px;overflow:visible" viewBox="0 0 14 14"><path fill="none" stroke="#4aa6ea" stroke-width="1.2" stroke-linecap="round" stroke-linejoin="round" d="M1 1.400h12v11.200H1z"/><path fill="#2f9be8" d="M3 9h8v1.800H3z"/></svg>
</div>
<div id="bot"></div>
<div id="menu">
<div class="ic"></div>
<div class="mi" style="top:0.2px"><svg viewBox="0 0 14 14"><path fill="#c9a24d" d="M.6 1.400h7.800v2H5.600v6.400H3.400V3.400H.6z"/><path fill="#c9a24d" d="M7 5.400l6 4.800-2.600.2 1.600 2.800-1.400.8-1.600-2.800L7 13z"/></svg><span>提取文字</span></div>
<div class="mi" style="top:19.2px"><svg viewBox="0 0 14 14"><path fill="none" stroke="#c9a24d" stroke-width="1.2" stroke-linecap="round" stroke-linejoin="round" d="M1.200 1.200h11.600v11.600H1.200zM1.200 5h11.600M1.200 9h11.600M5 1.200v11.600M9 1.200v11.600"/><path fill="#c9a24d" d="M8.400 7.600l5.200 4-2.300.2 1.200 2.200-1.100.6-1.200-2.200-1.800 1.400z"/></svg><span>提取表格</span></div>
<div class="mi" style="top:38.2px"><svg viewBox="0 0 14 14"><path fill="none" stroke="#c9a24d" stroke-width="1.2" stroke-linecap="round" stroke-linejoin="round" d="M2 12.400C2 6.400 6.400 2.200 12.400 2.200M5.400 12.400c0-3.800 2.400-6.400 6-6.600"/><circle cx="2" cy="12.400" r="1.100" fill="#c9a24d"/></svg><span>弧长</span></div>
<div class="mi" style="top:57.1px"><svg viewBox="0 0 14 14"><path fill="none" stroke="#c9a24d" stroke-width="1.3" stroke-linecap="round" stroke-linejoin="round" d="M1.600 2l5.600 5.400M13 3.200L3.400 12.800"/><circle cx="1.800" cy="2" r="1.200" fill="#c9a24d"/><circle cx="12.600" cy="3.600" r="1.100" fill="#c9a24d"/></svg><span>点到直线的距离</span></div>
<div class="mi" style="top:76.1px"><svg viewBox="0 0 14 14"><path fill="none" stroke="#c9a24d" stroke-width="1.3" stroke-linecap="round" stroke-linejoin="round" d="M6.200 1.800C3.400 3.800 2.600 7 4.400 9.800l6.800 1.600"/><circle cx="6.400" cy="1.800" r="1.200" fill="#c9a24d"/><circle cx="4.200" cy="9.800" r="1.300" fill="#c9a24d"/><circle cx="11.800" cy="11.600" r="1.300" fill="#c9a24d"/></svg><span>连续测量</span><em>L</em></div>
<div class="mi" style="top:95.0px"><svg viewBox="0 0 14 14"><path fill="none" stroke="#c9a24d" stroke-width="1.1" stroke-linecap="round" stroke-linejoin="round" stroke-dasharray="1.600 1.100" d="M1.200 1.200h11.600v11.600H1.200z"/><path fill="none" stroke="#c9a24d" stroke-width="1" stroke-linecap="round" stroke-linejoin="round" d="M3.400 10.600V5.400h7.200v2.800c-2.800 0-4.400.8-5 2.400z"/></svg><span>批量测量</span></div>
<div class="mi" style="top:113.9px"><svg viewBox="0 0 14 14"><path fill="none" stroke="#c9a24d" stroke-width="1.1" stroke-linecap="round" stroke-linejoin="round" d="M5 2.400h7.600v7H5L1.600 6zM7 5h3.600M7 7.200h3.600M4 11v1.800h6.400"/><circle cx="11.600" cy="12.600" r="1.100" fill="#c9a24d"/></svg><span>查看分段长度</span></div>
<div class="mi" style="top:132.9px"><svg viewBox="0 0 14 14"><path fill="none" stroke="#c9a24d" stroke-width="1.1" stroke-linecap="round" stroke-linejoin="round" d="M7 1.800l5.600 5.400L7 12.600 1.400 7.200zM4.600 7.200l2.400 2.400 3-3.400"/><path fill="#c9a24d" d="M10.600.6l2.600 2.600-1 1-2.600-2.600z"/></svg><span>修改单个标注属性</span></div>
<div class="mi" style="top:151.8px"><svg viewBox="0 0 14 14"><path fill="none" stroke="#c9a24d" stroke-width="1.2" stroke-linecap="round" stroke-linejoin="round" d="M1.600 12.600V3.200h3V1.400h4v1.800h1.600l2.400 2.400v7z"/><path fill="none" stroke="#c9a24d" stroke-width="0.9" stroke-linecap="round" stroke-linejoin="round" d="M3.600 10.600h7M3.600 8.400h7M5 10.400v-2M7 10.400v-2M9 10.400v-2"/></svg><span>外部参照管理</span></div>
<div class="mi" style="top:170.8px"><svg viewBox="0 0 14 14"><path fill="none" stroke="#c9a24d" stroke-width="1.2" stroke-linecap="round" stroke-linejoin="round" d="M2 11.600C.8 7 3.400 2.400 8.600 2c3-.2 4.800 1.400 4.200 4.400-.6 3.400-3.400 5.800-7.400 6.200-1.600.2-3-.2-3.400-1z"/><path fill="none" stroke="#c9a24d" stroke-width="0.9" stroke-linecap="round" stroke-linejoin="round" d="M3 9.600l6-7M4.600 11.800l7.800-8.600M7.600 11.600l5-5.600"/></svg><span>面积(含弧线)</span></div>
<div class="mi" style="top:189.8px"><svg viewBox="0 0 14 14"><path fill="none" stroke="#c9a24d" stroke-width="1.2" stroke-linecap="round" stroke-linejoin="round" d="M1.400 8.600C1 4.800 4 1.800 8.200 1.800c3.400 0 5.200 2 4.600 5-.6 3.200-3.600 5.400-7 5.400-2.600 0-4.200-1.400-4.400-3.600z"/><path fill="none" stroke="#c9a24d" stroke-width="0.9" stroke-linecap="round" stroke-linejoin="round" d="M4.200 8c0-1.800 1.600-3.200 3.800-3.200 1.600 0 2.400 1 2.200 2.200C10 8.600 8.600 9.600 6.600 9.600 5.200 9.600 4.200 9 4.200 8zM2.200 6l2.400 1M5.600 2.600l1.400 2.400M10 3l-1 2M12.600 6.400l-2.400.8M11 10.400l-1.800-1.600M5.600 11.800l.6-2.200"/></svg><span>测量填充面积</span></div>
<div class="mi" style="top:208.7px"><svg viewBox="0 0 14 14"><path fill="none" stroke="#c9a24d" stroke-width="1.1" stroke-linecap="round" stroke-linejoin="round" d="M1.400 4.600h8v8h-8zM1.400 4.600L4.600 1.400h8l-3.200 3.200M12.600 1.400v8l-3.200 3.200"/><path fill="none" stroke="#c9a24d" stroke-width="0.9" stroke-linecap="round" stroke-linejoin="round" d="M2.400 11.400l6-6M4.800 12.200l4.400-4.400"/></svg><span>计算侧面积</span></div>
<div class="mi" style="top:227.6px"><svg viewBox="0 0 14 14"><path fill="none" stroke="#c9a24d" stroke-width="1.2" stroke-linecap="round" stroke-linejoin="round" d="M1 1.600l12 1.800-1.400 9.600-8-1.400z"/><path fill="none" stroke="#c9a24d" stroke-width="1" stroke-linecap="round" stroke-linejoin="round" d="M4.400 4.800l5.800.8-.8 4.800-4-.8z"/></svg><span>面积偏移</span></div>
<div class="mi" style="top:246.6px"><svg viewBox="0 0 14 14"><circle cx="7" cy="7" r="5.600" fill="none" stroke="#c9a24d" stroke-width="1.2" stroke-linecap="round" stroke-linejoin="round"/><path fill="none" stroke="#c9a24d" stroke-width="1" stroke-linecap="round" stroke-linejoin="round" d="M2.800 9l6.400-6.600M3.600 11.200l8-8.200M6 12.400l6.400-6.600"/></svg><span>测量圆</span></div>
<div class="mi" style="top:265.6px"><svg viewBox="0 0 14 14"><path fill="none" stroke="#c9a24d" stroke-width="1.3" stroke-linecap="round" stroke-linejoin="round" d="M12.600 12H1.600L10.200 2.400M6.600 12c0-2-.8-3.600-2-4.400"/><circle cx="11" cy="2" r="1.100" fill="#c9a24d"/></svg><span>测量角度</span></div>
<div class="mi" style="top:284.5px"><svg viewBox="0 0 14 14"><path fill="none" stroke="#c9a24d" stroke-width="1.1" stroke-linecap="round" stroke-linejoin="round" d="M.8 1.800h12.400v10.400H.8z"/><text x="7" y="9.200" text-anchor="middle" font-family="Liberation Sans,sans-serif" font-size="5" fill="#c9a24d">CAD</text></svg><span>CAD图显示灰色</span></div>
<div class="mi" style="top:303.4px"><svg viewBox="0 0 14 14"><path fill="none" stroke="#c9a24d" stroke-width="1.3" stroke-linecap="round" stroke-linejoin="round" d="M6 2.200H2v10h10V8.600"/><path fill="#c9a24d" d="M9.400 1l4 3.200-4 3.200V5.600C7.400 5.600 6 6.600 5.400 8.800 5.200 5.400 6.800 3.200 9.400 3z"/></svg><span>天正图纸转换（转t3）</span></div>
<div class="mi" style="top:322.4px"><svg viewBox="0 0 14 14"><path fill="none" stroke="#c9a24d" stroke-width="1.5" stroke-linecap="round" stroke-linejoin="round" d="M3 6V3.600h7.400M11 8v2.400H3.600"/><path fill="#c9a24d" d="M9.400 1l3.600 2.600L9.400 6.200zM4.600 7.800L1 10.400 4.600 13z"/></svg><span>CAD图纸版本转换</span></div>
<div class="mi" style="top:341.3px"><svg viewBox="0 0 14 14"><path fill="none" stroke="#c9a24d" stroke-width="1.1" stroke-linecap="round" stroke-linejoin="round" d="M5.600 2.600H1.800v10h10V9M4 10.600V8M6.200 10.600V6.400M8.400 10.600V8.600"/><path fill="#c9a24d" d="M9.600.8l3.800 3-3.800 3V5.200c-2 0-3 .8-3.600 2.400C6 4.800 7.400 3 9.600 2.600z"/></svg><span>CAD图纸分割导出</span></div>
<div class="mi" style="top:360.3px"><svg viewBox="0 0 14 14"><path fill="none" stroke="#c9a24d" stroke-width="1" stroke-linecap="round" stroke-linejoin="round" d="M1.200 3v10h9.600M6.400 1.800H3.400v9h9V9M5.400 9V7.200M7.400 9V6M9.400 9V7.600"/><path fill="#c9a24d" d="M10 .4l3.600 2.800L10 6V4.600c-1.800 0-2.800.8-3.400 2.200 0-2.600 1.200-4.200 3.400-4.600z"/></svg><span>CAD图纸批量分割导出</span></div>
<div class="mi" style="top:379.2px"><svg viewBox="0 0 14 14"><path fill="none" stroke="#c9a24d" stroke-width="1" stroke-linecap="round" stroke-linejoin="round" d="M3.600 12.400c-1.600 0-2.600-1-2.600-2.400s1-2.400 2.400-2.400c.2-2 1.800-3.200 3.600-3 1.200.2 2 .8 2.400 1.800 1.800-.2 3.200.8 3.200 2.600s-1.200 3.400-3 3.400zM2 6.800V2.200h10.600v4.200M2.200 4.600l3-2M12 3.600L9 6"/></svg><span>布局转模型</span></div>
<div class="mi" style="top:398.2px"><svg viewBox="0 0 14 14"><rect x=".4" y=".4" width="13.200" height="13.200" rx="1.800" fill="#1b9cec"/><text x="7" y="9" text-anchor="middle" font-family="Liberation Sans,sans-serif" font-size="4.600" font-weight="bold" fill="#fff">P·C</text></svg><span>PDF转CAD</span></div>
<div class="mi" style="top:417.1px"><svg viewBox="0 0 14 14"><path fill="none" stroke="#c9a24d" stroke-width="1.1" stroke-linecap="round" stroke-linejoin="round" d="M12 8.600v2.600c0 1-.6 1.600-1.600 1.600H3.200c-1 0-1.600-.6-1.600-1.600V3c0-1 .6-1.600 1.600-1.600h7c1 0 1.800.6 1.800 1.600v3.600M12 6.600H8.600c-.8 0-1.200.4-1.200 1.200v1.600c0 .8.400 1.200 1.200 1.200H12"/><text x="4.600" y="7" text-anchor="middle" font-family="Liberation Sans,sans-serif" font-size="3.600" fill="#c9a24d">PDF</text></svg><span>导出PDF</span></div>
<div class="mi" style="top:436.1px"><svg viewBox="0 0 14 14"><path fill="none" stroke="#c9a24d" stroke-width="1" stroke-linecap="round" stroke-linejoin="round" d="M1.200 3.400v8c0 1 .6 1.600 1.600 1.600h8M6.600 1.800H4.800c-.8 0-1.400.6-1.400 1.400v6.400c0 .8.600 1.400 1.400 1.400h6.400c.8 0 1.400-.6 1.400-1.400V8.400"/><path fill="#c9a24d" d="M9.800.6l3.600 2.800-3.600 2.800V4.800c-1.800 0-2.800.8-3.400 2.200 0-2.600 1.200-4.200 3.400-4.600z"/></svg><span>批量导出PDF</span></div>
<div class="mi" style="top:455.0px"><svg viewBox="0 0 14 14"><path fill="none" stroke="#c9a24d" stroke-width="1.1" stroke-linecap="round" stroke-linejoin="round" d="M1 1.600h12v6H1zM3 3.600h.1M5 3.600h.1M7 3.600h.1M9 3.600h.1M11 3.600h.1M3.600 5.600h6.800"/><path fill="none" stroke="#c9a24d" stroke-width="1.2" stroke-linecap="round" stroke-linejoin="round" d="M2 9.600c2 2.400 4.600 3.600 8 3.400 1.800-.2 2.600-1 2.600-2.400V8.800M5.400 9.400l2 1.600h3"/></svg><span>快捷键设置</span></div>
</div>
<svg class="abs" style="left:0;top:0;width:1607px;height:865px" viewBox="0 0 1607 865">
<g fill="none" stroke="#f45252" stroke-width="3.500"><rect x="332.250" y="27.150" width="36.300" height="39.300"/><rect x="335.150" y="71.800" width="84" height="17.100" stroke-width="3.300"/></g>
<g fill="#f45252"><path d="M363.7 35.6 L387.4 37.9 L384.1 42.0 L384.9 42.3 L472.7 85.9 L601.0 149.1 L650.9 174.4 L720.5 209.7 L780.3 239.8 L816.8 258.2 L816.6 258.6 L779.8 240.9 L719.4 211.9 L649.0 178.4 L598.4 154.2 L470.1 91.3 L382.0 48.3 L381.2 47.9 L379.6 52.1Z"/><path d="M416.0 84.3 L439.5 88.1 L435.9 92.0 L436.7 92.5 L504.2 131.6 L585.6 178.6 L633.9 206.9 L701.0 246.6 L758.8 280.6 L793.9 301.2 L793.7 301.5 L758.2 281.6 L699.8 248.8 L631.7 210.7 L582.8 183.3 L501.2 136.7 L433.5 98.0 L432.7 97.6 L430.8 101.8Z"/></g>
<g fill="#f45252" font-family="Liberation Sans,sans-serif" font-size="23"><text x="622" y="149.500">1</text><text x="639" y="216.500">2</text></g>
</svg>
<div id="ime" class="abs" style="left:1400px;top:559.500px;width:220px;height:36px;background:#fff;border-radius:7px;box-shadow:0 0 2px rgba(0,0,0,.35)">
 <svg class="abs" style="left:9px;top:7px;width:24px;height:22px" viewBox="0 0 24 22"><path fill="none" stroke="#f26b1d" stroke-width="4.200" stroke-linecap="round" d="M20.500 4.500C14 1.500 4.500 2.500 4 7c-.5 4.500 16.500 2.500 16 7.500-.5 4-10.500 5-17 2.500"/></svg>
 <div class="abs" style="left:43.500px;top:6px;width:1px;height:23px;background:#d0d0d0"></div>
 <div class="abs" style="left:55px;top:4px;font-size:21px;line-height:28px;color:#111;font-weight:500">中</div>
 <div class="abs" style="left:91px;top:9px;width:7px;height:7px;border:1.600px solid #111;border-radius:50%"></div>
 <div class="abs" style="left:99px;top:8px;font-size:22px;line-height:22px;color:#111;font-weight:bold;font-family:'Liberation Serif',serif">,</div>
 <svg class="abs" style="left:123px;top:7px;width:20px;height:23px" viewBox="0 0 20 23"><g fill="none" stroke="#111" stroke-width="1.800" stroke-linecap="round"><rect x="6.200" y="1.200" width="7.600" height="12.600" rx="3.800"/><path d="M2.400 10.500c0 4.600 3.200 7.200 7.600 7.200s7.600-2.600 7.600-7.200M10 17.800v3.800"/></g></svg>
 <svg class="abs" style="left:161px;top:8px;width:23px;height:20px" viewBox="0 0 23 20"><g fill="none" stroke="#111" stroke-width="1.800"><rect x="1.200" y="1.200" width="20.600" height="17.600" rx="2.600"/><path stroke-width="2" stroke-dasharray="2 2.400" d="M6 6.400h12M6 10h12"/><path stroke-width="1.800" d="M7 14.400h9"/></g></svg>
 <div class="abs" style="left:202px;top:9px;width:10px;height:16px;border-radius:3px;background:linear-gradient(180deg,#ff5a7a,#b768f5)"></div>
</div>
<div class="abs" style="left:1605.500px;top:5px;width:2px;height:35px;background:#3a3a3a"></div>
<div class="hd" style="left:0;top:-1px"></div><div class="hd" style="left:791px;top:-1px"></div><div class="hd" style="left:1584px;top:-.8px"></div>
<div class="hd" style="left:-.5px;top:428.500px"></div><div class="hd" style="left:1584px;top:428.500px"></div>
<div class="hd" style="left:0;top:858px"></div><div class="hd" style="left:791px;top:857.500px"></div><div class="hd" style="left:1584px;top:858px"></div>
</body></html>
